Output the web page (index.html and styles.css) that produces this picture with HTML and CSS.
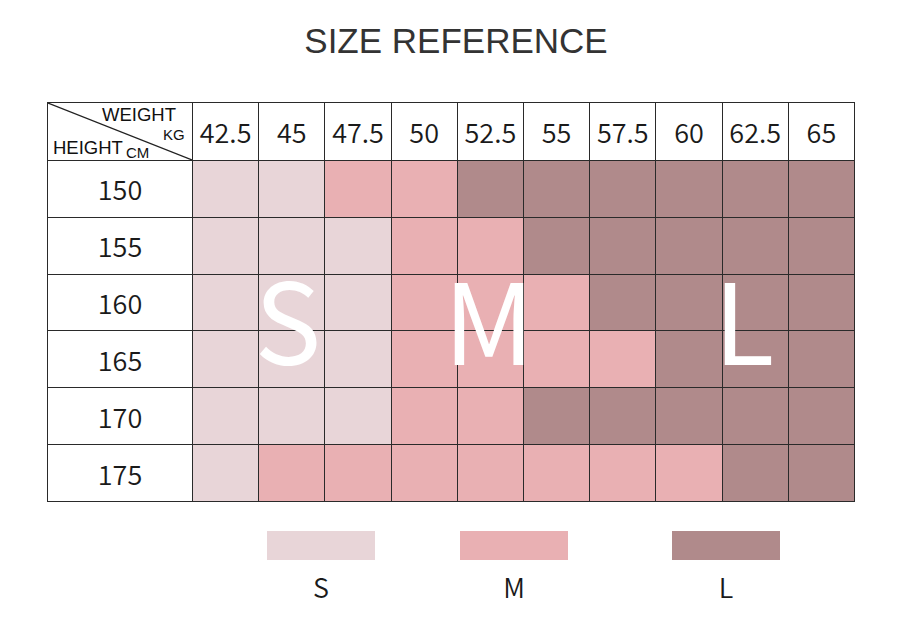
FILE: index.html
```html
<!DOCTYPE html>
<html lang="en">
<head>
<meta charset="utf-8">
<title>Size Reference</title>
<link rel="stylesheet" href="styles.css">
</head>
<body>
<div class="page">
  <h1 class="title">SIZE REFERENCE</h1>

  <div class="chart">
    <div class="grid">
      <div class="cell corner">
        <svg class="diag" viewBox="0 0 144 57" preserveAspectRatio="none"><line x1="0" y1="0" x2="144" y2="57" stroke="#222" stroke-width="1.2"/></svg>
        <span class="lbl weight">WEIGHT</span>
        <span class="lbl kg">KG</span>
        <span class="lbl height">HEIGHT</span>
        <span class="lbl cm">CM</span>
      </div>
      <div class="cell head">42.5</div>
      <div class="cell head">45</div>
      <div class="cell head">47.5</div>
      <div class="cell head">50</div>
      <div class="cell head">52.5</div>
      <div class="cell head">55</div>
      <div class="cell head">57.5</div>
      <div class="cell head">60</div>
      <div class="cell head">62.5</div>
      <div class="cell head">65</div>

      <div class="cell rowhead">150</div>
      <div class="cell s"></div><div class="cell s"></div><div class="cell m"></div><div class="cell m"></div><div class="cell l"></div><div class="cell l"></div><div class="cell l"></div><div class="cell l"></div><div class="cell l"></div><div class="cell l"></div>

      <div class="cell rowhead">155</div>
      <div class="cell s"></div><div class="cell s"></div><div class="cell s"></div><div class="cell m"></div><div class="cell m"></div><div class="cell l"></div><div class="cell l"></div><div class="cell l"></div><div class="cell l"></div><div class="cell l"></div>

      <div class="cell rowhead">160</div>
      <div class="cell s"></div><div class="cell s"></div><div class="cell s"></div><div class="cell m"></div><div class="cell m"></div><div class="cell m"></div><div class="cell l"></div><div class="cell l"></div><div class="cell l"></div><div class="cell l"></div>

      <div class="cell rowhead">165</div>
      <div class="cell s"></div><div class="cell s"></div><div class="cell s"></div><div class="cell m"></div><div class="cell m"></div><div class="cell m"></div><div class="cell m"></div><div class="cell l"></div><div class="cell l"></div><div class="cell l"></div>

      <div class="cell rowhead">170</div>
      <div class="cell s"></div><div class="cell s"></div><div class="cell s"></div><div class="cell m"></div><div class="cell m"></div><div class="cell l"></div><div class="cell l"></div><div class="cell l"></div><div class="cell l"></div><div class="cell l"></div>

      <div class="cell rowhead">175</div>
      <div class="cell s"></div><div class="cell m"></div><div class="cell m"></div><div class="cell m"></div><div class="cell m"></div><div class="cell m"></div><div class="cell m"></div><div class="cell m"></div><div class="cell l"></div><div class="cell l"></div>
    </div>
    <span class="big big-s">S</span>
    <span class="big big-m">M</span>
    <span class="big big-l">L</span>
  </div>

  <div class="legend">
    <div class="legend-item item-s">
      <div class="swatch s"></div>
      <div class="legend-label">S</div>
    </div>
    <div class="legend-item item-m">
      <div class="swatch m"></div>
      <div class="legend-label">M</div>
    </div>
    <div class="legend-item item-l">
      <div class="swatch l"></div>
      <div class="legend-label">L</div>
    </div>
  </div>
</div>
</body>
</html>
```

FILE: styles.css
```css
html, body {
  margin: 0;
  padding: 0;
  background: #ffffff;
}

.page {
  width: 900px;
  height: 621px;
  padding-top: 23px;
  box-sizing: border-box;
  overflow: hidden;
}

.title {
  margin: 0;
  padding-left: 12px;
  font-family: "Liberation Sans", Arial, sans-serif;
  font-weight: 400;
  font-size: 35px;
  line-height: 35px;
  color: #333333;
  text-align: center;
  letter-spacing: 0;
}

.chart {
  position: relative;
  margin-top: 44px;
  margin-left: 47px;
  width: 808px;
  height: 400px;
}

.grid {
  display: grid;
  grid-template-columns: 144px repeat(10, 1fr);
  grid-template-rows: 57px repeat(6, 1fr);
  gap: 1px;
  padding: 1px;
  width: 808px;
  height: 400px;
  box-sizing: border-box;
  background: #2a2a2a;
}

.cell {
  background: #ffffff;
  display: flex;
  align-items: center;
  justify-content: center;
  font-family: "Noto Sans CJK SC", "Noto Sans", sans-serif;
  font-weight: 350;
  font-size: 27px;
  color: #1a1a1a;
}

.cell.s { background: #e8d5d8; }
.cell.m { background: #e9b0b3; }
.cell.l { background: #b08a8b; }

.corner {
  position: relative;
  display: block;
}

.diag {
  position: absolute;
  left: 0;
  top: 0;
  width: 100%;
  height: 100%;
}

.lbl {
  position: absolute;
  font-family: "Liberation Sans", Arial, sans-serif;
  line-height: 1;
  color: #111111;
  white-space: nowrap;
}

.weight { left: 54px; top: 3px; font-size: 18.5px; }
.kg { left: 115px; top: 24px; font-size: 15px; }
.height { left: 5px; top: 35.5px; font-size: 18.5px; }
.cm { left: 78px; top: 42px; font-size: 15px; }

.big {
  position: absolute;
  top: 158px;
  font-family: "Noto Sans CJK SC", "Noto Sans", sans-serif;
  font-weight: 400;
  font-size: 112px;
  line-height: 1;
  color: #ffffff;
  transform: translateX(-50%);
}

.big-s { left: 241px; }
.big-m { left: 442px; }
.big-l { left: 697px; }

.legend {
  display: flex;
  margin-top: 29px;
  margin-left: 267px;
}

.legend-item {
  display: flex;
  flex-direction: column;
  align-items: center;
  width: 108px;
}

.item-m { margin-left: 85px; }
.item-l { margin-left: 104px; }

.swatch {
  width: 108px;
  height: 29px;
}

.swatch.s { background: #e8d5d8; }
.swatch.m { background: #e9b0b3; }
.swatch.l { background: #b08a8b; }

.legend-label {
  margin-top: 13px;
  font-family: "Noto Sans CJK SC", "Noto Sans", sans-serif;
  font-weight: 350;
  font-size: 27px;
  line-height: 1;
  color: #1a1a1a;
}
```
